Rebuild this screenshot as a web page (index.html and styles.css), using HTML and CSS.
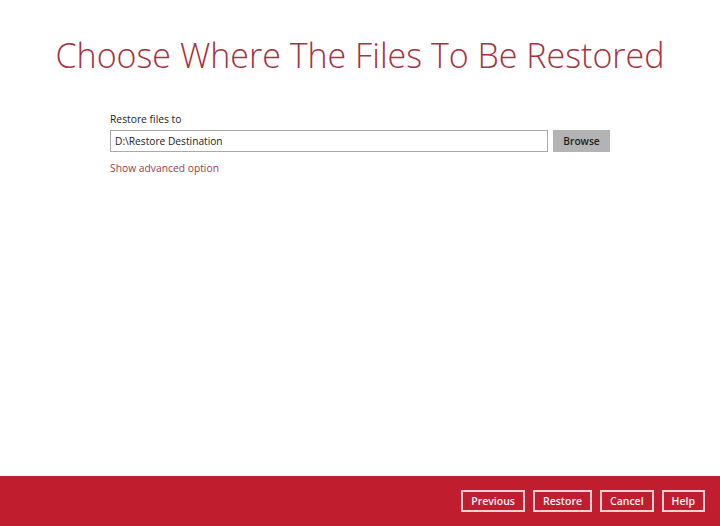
FILE: index.html
```html
<!DOCTYPE html>
<html lang="en">
<head>
    <meta charset="UTF-8">
    <title>Restore</title>
    <link rel="stylesheet" href="styles.css">
</head>
<body>
    <div class="main">
        <h1>Choose Where The Files To Be Restored</h1>
        <div class="form">
            <label for="dest">Restore files to</label>
            <div class="row">
                <input type="text" id="dest" value="D:\Restore Destination">
                <button class="browse">Browse</button>
            </div>
            <a class="advanced" href="#">Show advanced option</a>
        </div>
    </div>
    <div class="footer">
        <button class="btn">Previous</button>
        <button class="btn">Restore</button>
        <button class="btn">Cancel</button>
        <button class="btn">Help</button>
    </div>
</body>
</html>
```

FILE: styles.css
```css
body {
    margin: 0;
    font-family: "Open Sans", sans-serif;
    background-color: white;
    color: #222;
    height: 526px;
    display: flex;
    flex-direction: column;
}
.main {
    flex: 1;
}
h1 {
    margin: 30px 0 0;
    font-weight: 300;
    font-size: 34px;
    line-height: 50px;
    color: #a8323e;
    text-align: center;
}
.form {
    margin: 31px 0 0 110px;
    width: 500px;
}
label {
    display: block;
    font-size: 10.3px;
    line-height: 16px;
    margin-bottom: 3px;
}
.row {
    display: flex;
    gap: 5px;
}
input {
    width: 438px;
    height: 22px;
    box-sizing: border-box;
    border: 1px solid #a9a9a9;
    padding: 0 4px;
    font-family: "Open Sans", sans-serif;
    font-size: 10.2px;
    color: #222;
}
.browse {
    width: 57px;
    height: 22px;
    border: none;
    background-color: #b3b3b3;
    font-family: "Open Sans", sans-serif;
    font-size: 10.2px;
    font-weight: 600;
    color: #222;
    padding: 0;
}
.advanced {
    display: inline-block;
    margin-top: 9px;
    font-size: 10.3px;
    color: #a23a48;
    text-decoration: none;
}
.footer {
    height: 50px;
    background-color: #c01e2f;
    display: flex;
    justify-content: flex-end;
    align-items: center;
    gap: 8px;
    padding-right: 15px;
}
.btn {
    height: 22px;
    border: 2px solid #f4d0d4;
    background-color: #c01e2f;
    color: #fdf2f3;
    font-family: "Open Sans", sans-serif;
    font-size: 10.5px;
    font-weight: 600;
    padding: 0 8px;
    box-sizing: border-box;
}
```
